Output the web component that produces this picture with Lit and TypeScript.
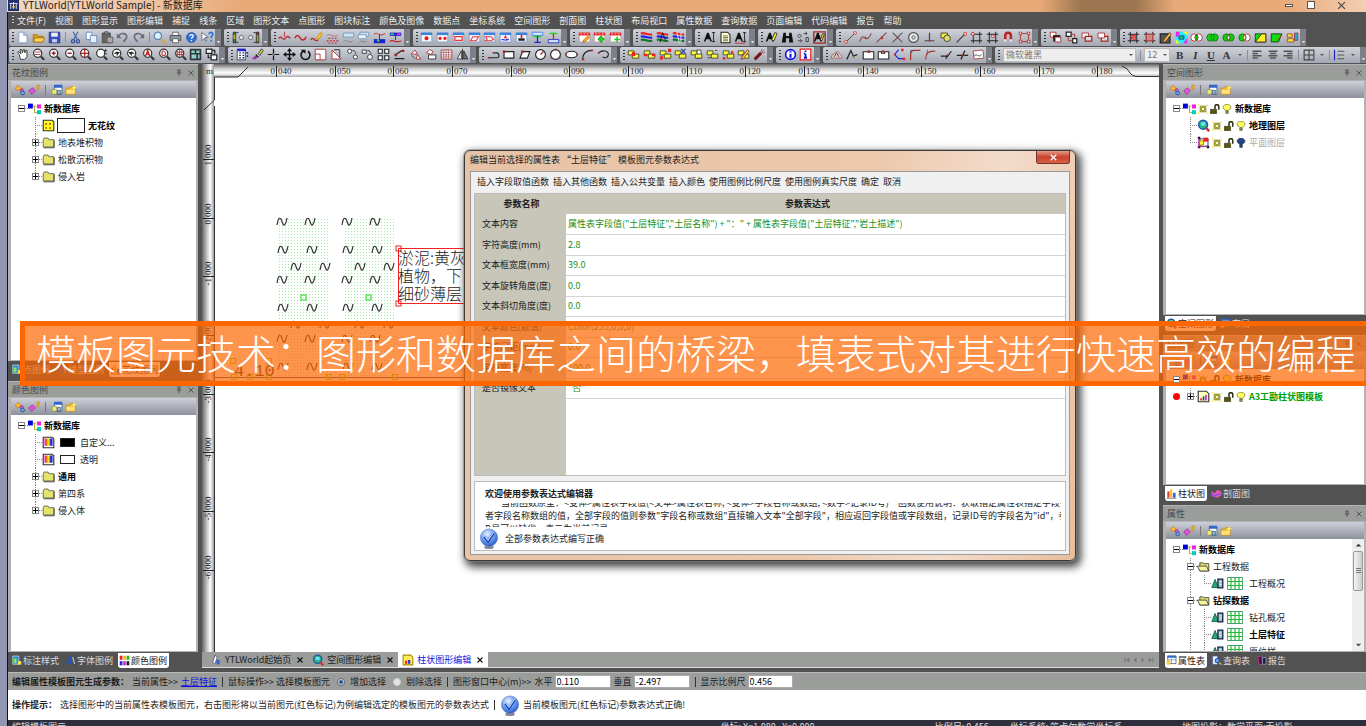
import { LitElement, html, svg, css, nothing } from 'lit';
import { customElement, property } from 'lit/decorators.js';
import { classMap } from 'lit/directives/class-map.js';

/* Glyph notation: layers split by ";", each "fill,stroke,path[,stroke width]" on a 16 x 16 grid; n = none. */
const MAG = '#fff,#333,M2 6.500a5 5 0 1 0 10 0a5 5 0 1 0-10 0,1.5;n,#333,M11 10.500l4 4,2.500;';
const WIN = '#f4f8fd,#7ba0ce,M1.500 2.500h13v11h-13z;#3b82dc,n,M1 2h14v3h-14z;';
const CAL = '#fff,#b99,M1.500 2.500h13v11h-13z;#e22,n,M1 2h14v3.500h-14z;#fff,n,M3 3h2v1h-2zM7 3h2v1h-2zM11 3h2v1h-2z;';
const YB = '#ff3,#333,M1.500 3.500h7v5h-7z;#ff3,#333,M6.500 7.500h8v5h-8z;';
const PEN = '#fc3,#733,M6 11l7-9l2 2l-7 9l-3 1z;';
const RED2 = '#fff,#a22,M2.500 2.500h8v6h-8z;#ddd,#a22,M6.500 6.500h8v6h-8z,1.500;';
const FR = 'n,#222,M4 1v14M12 1v14M1 4h14M1 12h14,1.200;';
const LET = '#111,n,M1 13l4-11h2l4 11h-2l-1-3h-4l-1 3z;';
const BLACK_I = 'n,#111,M13 2v11M11 2h4M11 13h4;';
const STR = 'n,#e22,M1 3c5-2 8 3 14 1,2.500;n,#22e,M1 7c5-2 8 3 14 1,2.500;n,#172,M1 11c5-2 8 3 14 1,2.500;';
const PAL = '#22c,n,M1 2h14v4h-14z;#3d3,n,M2 3h4v2h-4z;#e3e,n,M10 3h4v2h-4z;';

const GLYPHS: Record<string, string> = {
  new: '#fff,#7c9cc4,M3.500 1.500h6l4 4v9h-10z;#cfe0f4,#7c9cc4,M9.500 1.500v4h4z',
  open: '#d99a20,#a66e10,M1.500 4.500h5l1 2h6v7h-12z;#ffd65a,#a66e10,M3.500 8.500h12l-2.500 5h-11z',
  save: '#3a4fc4,#223090,M1.500 1.500h13v13h-13z;#eee,n,M4 2h8v5h-8z;#c8d0f0,n,M5 10h6v4h-6z',
  cut: 'n,#456ba8,M5 1l5 9M11 1l-5 9,1.500;n,#2c4f9a,M3 12.500a2 2 0 1 0 4 0a2 2 0 1 0-4 0M9 12.500a2 2 0 1 0 4 0a2 2 0 1 0-4 0,1.500',
  copy: '#fff,#5a84c0,M1.500 1.500h7v9h-7z;#e4eefa,#5a84c0,M6.500 5.500h8v9h-8z',
  paste: '#666,#444,M1.500 2.500h10v12h-10z;#999,#444,M4.500 1h4v3h-4z;#aaa,#555,M7.500 7.500h7v7h-7z',
  undo: 'n,#666c78,M3 6c4-5 11-3 10 2c-1 3-3 4-4 5,2;#666c78,n,M1 3v6h6z',
  redo: 'n,#666c78,M13 6c-4-5-11-3-10 2c1 3 3 4 4 5,2;#666c78,n,M15 3v6h-6z',
  search: '#dff0fc,#5585b8,M1.500 6a4.500 4.500 0 1 0 9 0a4.500 4.500 0 1 0-9 0,1.500;n,#e0a030,M10 10l5 5,2.500',
  print: '#fff,#555,M4.500 1.500h7v4h-7z;#8e97a4,#444,M1.500 5.500h13v6h-13z;#fff,#555,M4.500 9.500h7v5h-7z',
  help: '#2f6fd8,#1b4fa0,M2 8a6 6 0 1 0 12 0a6 6 0 1 0-12 0;n,#fff,M6 6.500c0-3 4.500-2.500 4 0c-.5 1.500-2 1.500-2 3M8 11v1.500,1.600',
  whats: '#fff,#567,M1 2v10l3-3l2 4l1-1l-2-4h4z;n,#2f6fd8,M10 4c0-3 5-3 4.500 0c-.5 2-2 2-2 5M12.500 11v2,2',
  barL: '#384,#222,M1.500 1.500h3v13h-3z;#cb3,n,M2 5h2v5h-2z;n,#222,M5 2h3M5 14h3;#eee,#555,M9 8a2.500 2.500 0 1 0 5 0a2.500 2.500 0 1 0-5 0',
  barR: '#a23,#222,M11.500 1.500h3v13h-3z;#6b5,n,M12 5h2v8h-2z;n,#222,M8 2h3M8 14h3;#eee,#555,M2 8a2.500 2.500 0 1 0 5 0a2.500 2.500 0 1 0-5 0',
  cv1: 'n,#b22,M1 9c3-5 5 4 8 0s4-2 6 0,1.500;n,#b22,M8 1v6',
  cv2: 'n,#b22,M1 9c3-6 5-3 7 0s5 3 7-2,1.700',
  cv3: 'n,#b22,M1 11c3-6 5 4 9 0,1.500;#fc3,#c80,M8 9l5-7l2 1l-4 7z',
  cv4: 'n,#b66,M1 6c4-5 8 4 14-1;n,#c33,M1 12h2M5 12h2M9 12h2M13 12h2M3 9h2M7 9h2M11 9h2M3 15h2M7 15h2M11 15h2,1.600',
  cv5: '#cfe4f4,#6b93b8,M1.500 2.500h13v5h-13z;n,#777,M2 13c3-5 6 4 11-1',
  cv6: '#cfe4f4,#6b93b8,M3.500 1.500h11v5h-11z;#e8f2fa,#6b93b8,M1.500 4.500h10v5h-10z;n,#777,M3 14c3-4 6 2 9-2',
  pi1: 'n,#c22,M1 4c4-4 7 4 14-1;#22c,n,M1 10h14v5h-14z;#3d3,n,M5 10h3v3h-3z;n,#222,M8 4v7',
  pi2: PAL + 'n,#222,M8 6v5;n,#c22,M1 13c4-4 7 3 14-1,1.500',
  wDot: WIN + '#e11,n,M5.500 9a2.500 2.500 0 1 0 5 0a2.500 2.500 0 1 0-5 0',
  wDots: WIN + '#e11,n,M3 9a2 2 0 1 0 4 0a2 2 0 1 0-4 0M9 9a2 2 0 1 0 4 0a2 2 0 1 0-4 0',
  wRect: WIN + 'n,#e33,M3.500 7h9v4.500h-9z,1.500',
  wPara: WIN + 'n,#e33,M6 7h7l-3 5h-7z,1.300',
  wD: WIN + 'n,#e33,M3 7h7l3 3l-3 2h-7l2-2z,1.300',
  wArr: WIN + 'n,#22c,M3 11c2-2 4 2 9-1,1.500;#e11,n,M8 5l2 4h-4z',
  wSt: WIN + '#222,n,M4 9h8v3h-8z;#e11,n,M7 5h2v4h-2z',
  wI: '#cfe4f4,#3b82dc,M1.500 1.500h13v4h-13z;#3d3,n,M3 6h10v2h-10z;n,#22c,M8 6v8M4 14h8,1.600',
  wI2: '#3d3,n,M3 2h10v2h-10z;n,#d22,M8 3v7,1.600;#cfe4f4,#22c,M1.500 10.500h13v4h-13z',
  calP: CAL + '#fa2,#b60,M7 11l5-5l2 2l-5 5l-3 1z',
  calD: CAL + '#2c2,#181,M10 6l4 4l-4 4l-4-4z',
  calA: CAL + 'n,#2c2,M10 7v7M6.500 10.500h7,2',
  st1: STR,
  st2: STR + 'n,#111,M5 14l3-12l4 10',
  st3: STR + 'n,#fff,M6 1l3 14M11 2v12',
  tA: LET + BLACK_I,
  tDoc: '#ffc,#222,M2.500 1.500h8l3 3v10h-11z,1.300;n,#555,M5 6h6M5 8h6M5 10h6M5 12h6',
  tU: LET + BLACK_I + 'n,#c22,M1 15h13',
  aPen: LET + '#ee3,#222,M8 11l4-9l3 1l-4 9z',
  bino: '#111,n,M3 2h3v4h4v-4h3l2 12h-5v-5h-4v5h-5z',
  abc: 'n,#333,M3 4a2 2 0 1 0 .1 0M8 3h4l-1-2M12 3l-1 2M11 8h3v5h-3zM1 12h5l-2-2M6 12l-2 2',
  aBox: 'n,#a22,M1 1h14v14h-14z,1.600;' + LET + '#ee3,#222,M9 11l3-8l2 1l-3 8z',
  s1: 'n,#333,M2 14l11-11;#fff,#c33,M1 12h3v3h-3zM12 1h3v3h-3z',
  s2: 'n,#844,M1 13c3-9 5-5 7-4s5 0 7-6,1.300;#c33,n,M7 7h2v2h-2z',
  s3: 'n,#844,M2 14l12-12,1.300;#c33,n,M7 7h3v3h-3z',
  s4: 'n,#555,M2 2l12 12M14 2l-12 12,1.300;#c33,n,M7 7h2v2h-2z',
  s5: '#e8e8e8,#555,M2 8a6 6 0 1 0 12 0a6 6 0 1 0-12 0,1.500;n,#555,M6 8a2 2 0 1 0 4 0a2 2 0 1 0-4 0,1.200',
  s6: 'n,#444,M8 2v11M2 12h12,1.500;#c33,n,M7 11h2v2h-2z',
  s7: '#ee3,#333,M2.500 2.500h8v6h-8z;#dd6,#333,M6 9a4 4 0 1 0 8 0a4 4 0 1 0-8 0',
  s8: 'n,#444,M2 14l10-10,1.500;#fff,#c33,M11 2h3v3h-3z',
  s9: FR + '#fff,#c33,M2 2h3v3h-3z',
  s10: FR + '#fff,#c33,M7 5h3v3h-3z',
  mag: 'n,#b22,M4 12v-6c0-5 7-5 7 0v6,3;n,#eee,M4 10v3M11 10v3,3',
  sel: 'n,#a22,M3 3h10v10h-10z;#fff,#a22,M1.500 1.500h3v3h-3zM11.500 1.500h3v3h-3zM1.500 11.500h3v3h-3zM11.500 11.500h3v3h-3z',
  r1: '#fff,#a22,M1.500 1.500h7v6h-7z;#222,n,M5 5h9v8h-9z;#fff,#a22,M7.500 7.500h7v6h-7z',
  r2: '#fff,#222,M1.500 1.500h6v5h-6zM9.500 9.500h5v5h-5z,1.500;n,#a22,M8 4h4v5M4 7v5h5',
  r3: RED2,
  r4: '#ddd,#a22,M6.500 6.500h8v6h-8z,1.500;#fff,#a22,M2.500 2.500h8v6h-8z',
  d1: FR + '#e22,n,M5 5h6v6h-6z;#fff,n,M6 6h1v1h-1zM9 6h1v1h-1zM7.500 8h1v1h-1zM6 10h1v1h-1zM9 9h1v1h-1z',
  d2: FR + '#c88,#c33,M4 4h8v8h-8z',
  d3: '#555,#222,M1.500 3.500h12v11h-12z,1.500;' + PEN,
  d4: '#2ef,n,M1 1h14v14h-14z;#e2e,n,M1 1h5l-2 6h-3zM10 15h5v-6z;#ff2,n,M9 1h6v4zM1 10l5 5h-5z;#2c4,#22c,M5 6h6v4h-6z',
  v1: '#fff,#b22,M1 8a4.500 4.500 0 1 0 9 0a4.500 4.500 0 1 0-9 0M6 8a4.500 4.500 0 1 0 9 0a4.500 4.500 0 1 0-9 0;#1c1,#171,M8 4.500a5 5 0 0 1 0 7a5 5 0 0 1 0-7z',
  v2: '#1c1,#171,M1 8a4.500 4.500 0 1 0 9 0a4.500 4.500 0 1 0-9 0M6 8a4.500 4.500 0 1 0 9 0a4.500 4.500 0 1 0-9 0',
  v3: '#1c1,#171,M1 8a4.500 4.500 0 1 0 9 0a4.500 4.500 0 1 0-9 0M6 8a4.500 4.500 0 1 0 9 0a4.500 4.500 0 1 0-9 0;#fff,#b22,M8 4.500a5 5 0 0 1 0 7a5 5 0 0 1 0-7z',
  v4: '#fff,#b22,M6 8a4.500 4.500 0 1 0 9 0a4.500 4.500 0 1 0-9 0;#1c1,#171,M1 8a4.500 4.500 0 1 0 9 0a4.500 4.500 0 1 0-9 0;#fff,#b22,M8 4.500a5 5 0 0 1 0 7a5 5 0 0 1 0-7z',
  g1: '#1d1,#222,M1.500 3.500h13v10h-13z;#fe2,#222,M1.500 13.500l8-10h5v10z',
  g2: '#1d1,#222,M1.500 3.500h13l-4 10h-9z;n,#c22,M9 12l6-8',
  g3: '#ee3,#a33,M1.500 3.500h6v4h-6zM1.500 9.500h8v4h-8z;#2ac,#a33,M10.500 2.500h4v9h-4z',
  hand: '#fff,#222,M4 8l-2-3l1-1l3 3l-1-5h2l1 4l1-4h1.500l.5 4l1-3h1.500l0 8l-3 3h-5z',
  mW: MAG + 'n,#a22,M3 8h7M4 5h7',
  mP: MAG + 'n,#a22,M7 4v5M4.500 6.500h5,1.800',
  mM: MAG + 'n,#a22,M4.500 6.500h5,1.800',
  mX: MAG + 'n,#a22,M7 1v11M1.500 6.500h11,1.500',
  mS: MAG + 'n,#333,M13 1v4M11 3h4M11 7h4',
  mL: MAG + '#222,n,M9 3l-6 4h4v3l4-5h-4z',
  mR: MAG + '#222,n,M5 3l6 4h-4v3l-4-5h4z',
  mA: MAG + 'n,#c11,M4.500 10l2.500-7l2.500 7M5 7.500h4,1.600',
  mD: MAG + 'n,#a22,M5 4h3l1 1v4h-4z,1.200',
  mG: MAG + 'n,#a22,M4.500 3v8M7 2v9M9.500 3v8M2.500 5h9M2.500 8h9',
  lay: '#243c3c,#222,M1.500 1.500h13v13h-13z;#9cc,n,M3 3h4v3h-4zM9 3h4v3h-4zM3 8h6v5h-6zM11 8h2v5h-2z',
  lay2: '#fff,#222,M1.500 1.500h7v5h-7zM7.500 8.500h7v6h-7z,1.500;n,#222,M4 8v4h3M12 7v-4h-3,1.500',
  cal: '#fff,#235,M1.500 1.500h10v13h-10z;#22c,n,M2 1h10v3h-10zM13 5h2v2h-2zM13 9h2v2h-2z;n,#235,M4 6h2M4 9h2M4 12h2M8 6h2M8 9h2M8 12h2,1.600',
  brush: '#dd3,#222,M9 7l4-6l2 2l-4 6z;#222,n,M6 7l4 4l-4 1z;#93a,n,M1 13l5-4l2 3l-3 2z',
  move0: 'n,#111,M8 1v14M1 8h14,1.500;#888,n,M6.500 6.500h3v3h-3z',
  move: 'n,#111,M8 2v12M2 8h12,1.700;#111,n,M8 0l3 4h-6zM8 16l3-4h-6zM0 8l4-3v6zM16 8l-4-3v6z',
  rot: 'n,#111,M5 4a5.500 5.500 0 1 0 6 0,2;#111,n,M2 2h6v5z',
  sc: '#fff,#a22,M1.500 1.500h13v13h-13z;n,#a22,M1.500 7.500h6v7',
  tri: '#fff,#a22,M2.500 2.500l11 11h-11z;n,#222,M5 2h7v10',
  o1: '#fff,#222,M2 4a2.500 2.500 0 1 0 5 0a2.500 2.500 0 1 0-5 0M9 11a2.500 2.500 0 1 0 5 0a2.500 2.500 0 1 0-5 0;n,#222,M8 3c3 0 4 2 4 4',
  o2: '#fff,#222,M1.500 2.500h5v4h-5zM8 11a3 3 0 1 0 6 0a3 3 0 1 0-6 0;n,#222,M8 3c3 0 4 2 4 4',
  o3: '#fff,#222,M1.500 1.500h5v5h-5zM9.500 1.500h5v5h-5zM1.500 9.500h5v5h-5zM9.500 9.500h5v5h-5z,1.300',
  o4: 'n,#222,M2 13h12M2 9l9-6,1.500;#a22,n,M2 7h3v3h-3zM11 2h3v3h-3z',
  o5: '#fff,#a22,M2.500 7.500l5-5l3 5zM8.500 13.500l2-5l4 5z;n,#222,M3 9l4 4',
  o6: '#fff,#a22,M3 6l4-4l4 2l-2 4z;#fff,#222,M5.500 8.500h9v5h-9z',
  grid: '#fff,#a22,M1.500 2.500h13v11h-13z;n,#a66,M4.500 3v10M7.500 3v10M10.500 3v10M2 5.500h12M2 8.500h12M2 11h12',
  flip: '#fff,#222,M1.500 13.500l5-10v10z;#777,#222,M14.500 13.500l-5-10v10z;n,#222,M8 1v14',
  p1: 'n,#222,M2 12h10c4 0 3-6 0-6h-3,1.400;#a22,n,M1 11h2v2h-2zM7 5h2v2h-2z',
  p2: '#fff,#222,M2.500 4.500h12v8h-12z,1.400;#a22,n,M1 3h3v3h-3z',
  p3: '#fff,#222,M5.500 4.500h9l-3 8h-9z,1.400;#a22,n,M4 3h3v3h-3z',
  p4: '#fff,#222,M2 8a6 6 0 1 0 12 0a6 6 0 1 0-12 0,1.400;n,#a22,M8 8l4-4,1.500',
  p5: '#fff,#222,M2 8a6 6 0 1 0 12 0a6 6 0 1 0-12 0,1.400;#a22,n,M7 1h2v2h-2zM2 11h2v2h-2zM12 11h2v2h-2z',
  p6: '#fff,#222,M1 8a7 4 0 1 0 14 0a7 4 0 1 0-14 0,1.400;#a22,n,M0 7h2v2h-2zM14 7h2v2h-2z',
  p7: 'n,#222,M2 14c0-7 4-11 12-11,1.400;#a22,n,M1 13h3v2h-3zM12 2h3v2h-3z',
  p8: 'n,#222,M2 6c4-4 12-3 12 2c0 4-5 5-7 3,1.400;#a22,n,M1 5h2v2h-2z',
  y1: YB + '#e22,n,M6 5h4v5h-4z', y2: YB + '#e22,n,M1 7h4v3h-4zM11 7h4v3h-4z',
  y3: YB + '#e22,n,M1 10h4v4h-4zM11 1h4v4h-4z', y4: YB + 'n,#24a,M9 1l5 6M14 1l-5 6,1.500',
  y5: '#fff,#333,M8.500 2.500h5v10h-5z;' + YB, y6: YB + 'n,#333,M2 12h4M11 3h3',
  y7: YB + '#e22,n,M1 11h3v3h-3zM11 4h3v3h-3z', y8: YB + PEN,
  y9: 'n,#711,M2 14l8-8,3.500;n,#a44,M10 5l1-4M11 6l4-1M11 5l3-3',
  i1: '#fff,#11d,M2 8a6 6 0 1 0 12 0a6 6 0 1 0-12 0,2;n,#11d,M8 7v5M8 4v1.500,2.500',
  i2: '#fff,#e22,M1.500 1.500h13v13h-13z,1.500;n,#11d,M8 7v5M8 3v2M6 7h2M6 12h4,2.200',
  e1: '#dcc,#a55,M1.500 12.500c0-5 3-4 4-6s5-3 6 0s4 1 3 6z;n,#333,M5 11l3-5l3 5',
  e2: 'n,#222,M1 14l5-11l3 7l5-2,1.500;#993,n,M8 9l4 4l-4-1z',
  e3: '#fff,#222,M1.500 4.500h13v9h-13z,1.300;#a22,n,M7 3h3v3h-3z',
  e4: '#fff,#222,M1.500 4.500h4v2h4v-2h5v9h-13z,1.300;#a22,n,M6 3h3v2h-3z',
  e5: 'n,#22d,M7 2l-5 6l5 5h6,1.400;#e22,n,M10 1h3v3h-3zM12 12h3v3h-3zM1 7h2v2h-2z',
  e6: 'n,#a33,M2 15v-7c0-3 2-5 5-5h7,1.500;n,#555,M2 3v4M2 3h4',
  e7: 'n,#a33,M2 14c0-6 2-11 12-10,1.500;n,#555,M4 2v6',
  e8: 'n,#222,M1 10h8M7 13l7-9,1.500;#a22,n,M8 8h2v2h-2z',
  e9: 'n,#222,M1 9h14M6 14l5-11,1.500;#a22,n,M7 8h3v2h-3z',
  e10: '#fff,#a33,M1.500 3.500l12-1l1 10l-12 1z;n,#333,M3 10c2-5 5 3 9-2',
  al: 'n,#555,M2 3h12M2 6h7M2 9h12M2 12h7,1.800', ac: 'n,#555,M2 3h12M4 6h8M2 9h12M4 12h8,1.800', ar: 'n,#555,M2 3h12M7 6h7M2 9h12M7 12h7,1.800',
  brd: 'n,#444,M1.500 1.500h13v13h-13zM8 1.500v13M1.500 8h13,1.500',
  lst: 'n,#555,M6 3h9M6 8h9M6 13h9,1.600;n,#22c,M2 1v14,1.600',
  dn: '#555,n,M4 6h8l-4 4z',
  up: '#333,n,M4 10h8l-4-4z',
  /* panels */
  pa: '#fb3,#b70,M1.500 6l4-4l4 4l-4 3z;#d6d,#828,M8 8l3-2l2 3l-3 2z;#6ae,#248,M9 12a2.500 2.500 0 1 0 5 0a2.500 2.500 0 1 0-5 0',
  pb: '#d5d,#938,M1 9l5-4l4 4l-5 5z;#fb3,#c80,M12 1.500h3l-1 6h-2z',
  pc: '#fff,#357,M4.500 2.500h10v11h-10z;#36c,n,M4 1h11v4h-11z;#ee7,#995,M1.500 7.500h6v6h-6z;#9bd,#357,M8.500 8.500h4v5h-4z',
  pd: '#f5c33b,#c48a14,M1.500 5.500h5l1-2h6v10h-12z;#ffe27a,n,M2 8h11v5h-11z;#fff27a,n,M12 1l1 3l3 1l-3 1l-1 3l-1-3l-2-1l2-1z',
  pin: 'n,#444,M5 2h6M6 2v6M10 2v6M4 8h8M8 8v6,1.500',
  x: 'n,#444,M3 3l10 10M13 3l-10 10,1.600',
  xb: 'n,#111,M3 3l10 10M13 3l-10 10,2.200',
  db: '#00d,n,M0 2h6v6h-6z;n,#a90,M6 5h4M8 5v8h3;#e2d,n,M11 3h5v5h-5z;#0cb,n,M11 10h5v5h-5z',
  pat: '#ff2,#333,M1.500 1.500h11l2 2v11h-13z,1.400;#c30,n,M4 5h2v2h-2zM9 5h2v2h-2zM4 10h2v2h-2zM9 10h2v2h-2z',
  fold: '#e4e46a,#555,M1.500 4.500l1-2h5l1 2h6v9h-13z;n,#333,M2 14.500h13v-9',
  foldo: '#e4e46a,#333,M3.500 6.500v-3h4l1 1h6v9h-11z;#f6f69a,#333,M.5 7.500h11l3 6h-11z',
  pal: '#fff,#333,M1.500 1.500h11l2 2v11h-13z,1.400;#e2e,n,M3 3h2v9h-2z;#e60,n,M5 3h2v9h-2z;#fd0,n,M7 3h2v9h-2z;#0ad,n,M9 3h1v9h-1z;#22d,n,M10 3h3v9h-3z',
  sun: '#ee2,#772,M3.500 3.500h9v9h-9z,1.400;#ee2,n,M0 0l5 2h-5zM16 0v4l-3-2zM0 16v-4l3 3zM16 16h-4l2-3z;#ffb,#773,M5 8a3 3 0 1 0 6 0a3 3 0 1 0-6 0,1.400',
  lock: '#551,#331,M.5 8.500h10v7h-10z;n,#331,M8 8v-4c0-4 6-4 6 0v5,2.500',
  bulb: '#ff5,#885,M5 .5h6l3 3v3l-4 4h-4l-4-4v-3z,1.400;#995,#553,M6 11v4h4v-4z',
  bulbd: '#248,#124,M5 .5h6l3 3v3l-4 4h-4l-4-4v-3z;#357,#124,M6 11v4h4v-4z',
  geo: '#2b8,#25a,M2 7a5.500 5.500 0 1 0 11 0a5.500 5.500 0 1 0-11 0,1.800;#7df,n,M5 4h5v4h-5z;n,#c33,M11 11l4 4,3',
  plan: '#fff,#222,M3.500 3.500h10v9h-10z;#ff3,#a60,M3 6h5v5h-5z;#e22,n,M8 2h6v5h-6z;#111,n,M1 1h3v3h-3zM1 12h3v3h-3zM12 12h3v3h-3z;n,#a2a,M2 13h12M2 2v12',
  log: '#ffb,#333,M1.500 1.500h10l3 3v10h-13z,1.400;#e22,n,M4 10h2v3h-2z;#22d,n,M7 8h2v5h-2z;#b2b,n,M10 6h2v7h-2z',
  loy: '#fe5,#a80,M1.500 1.500h10l3 3v10h-13z,1.400;#e22,n,M4 9h3v4h-3z;#33d,n,M8 8h3v5h-3z',
  tree: '#2a7,#153,M5 3l4 10h-8z;#9bc,#124,M8.500 2.500h6v11h-6z,1.600;n,#fff,M10 6h3M10 9h3',
  tbl: '#fff,#184,M.5 .5h19v15h-19z;n,#2b3,M5 1v14M10 1v14M15 1v14M1 5.500h18M1 10.500h18,1.500',
  t1: '#38d,#cde,M2.500 1.500h9v12h-9z;#7e5,n,M4 5h4v7h-4z;#fd5,n,M10 9h5v5h-5z',
  t2: '#25b,n,M1 13l7-11h2v11h-3v-5l-3 5z;n,#bcf,M11 3l3 10,1.500',
  t3: '#e22,n,M1 1h4v6h-4z;#fb0,n,M6 1h4v6h-4z;#2b2,n,M11 1h4v6h-4z;#22d,n,M1 9h4v6h-4z;#d2d,n,M6 9h4v6h-4z;#222,n,M11 9h4v6h-4z',
  t4: '#d33,n,M2 5h3v9h-3z;#fb2,n,M6 2h3v12h-3z;#36d,n,M10 7h4v7h-4z;n,#555,M1 15h14',
  t5: '#e5a,n,M1 4l4 4l4-5l6 2v6l-6 3l-8-2z;n,#75f,M1 8l4 4l5-3l5 1,2',
  t6: '#fff,#246,M2.500 1.500h12v11h-12z;#36c,n,M2 1h13v3h-13z;#fc3,n,M1 8h5v6h-5z;n,#68a,M8 5v7M3 7h11',
  t7: '#fff,#36c,M2.500 1.500h7v12h-7z;#7ad,#25b,M6 8a3 3 0 1 0 6 0a3 3 0 1 0-6 0,1.500;n,#fb3,M12 11l3 3,2',
  t8: '#513,#b4a,M2.500 2.500h6l1 11h-5z;#223,#9ad,M9.500 3.500h5v10h-5z',
  jet: '#fff,#446,M6.500 1.500l3 3l-3 9l-3-2z;#36c,n,M8 8h5v6h-4z',
  nf: '#777,n,M3 3h2v10h-2zM13 3v10l-7-5z', np: '#777,n,M11 3v10l-6-5z', nn: '#777,n,M5 3v10l6-5z', nl: '#777,n,M11 3h2v10h-2zM3 3v10l7-5z',
  app: '#24306c,n,M0 0h16v16h-16z;n,#fff,M2 5h12M4 5v8M8 3v10M12 5v8,1.200;#fc4,n,M6 9h4v2h-4z',
};

const glyph = (name: string) => html`<svg class="g" viewBox=${name === 'tbl' ? '0 0 20 16' : '0 0 16 16'} aria-hidden="true">${(GLYPHS[name] ?? '')
  .split(';').filter(Boolean).map(part => {
    const [f, s, d, w] = part.split(',');
    return svg`<path d=${d} fill=${f === 'n' ? 'none' : f} stroke=${s === 'n' ? 'none' : s} stroke-width=${w ?? '1'}></path>`;
  })}</svg>`;

const base = css`
  *, *::before, *::after { box-sizing: border-box; }
  .g { display: block; width: 13px; height: 13px; flex: none; }
  button { border: 0; padding: 0; margin: 0; background: none; font: inherit; color: inherit; }
  a { color: #1111dd; }
`;

const BALL = html`<svg class="ball" viewBox="0 0 20 24" aria-hidden="true">
  <defs><radialGradient id="bg" cx=".4" cy=".3" r=".8"><stop offset="0" stop-color="#e8f2ff"/><stop offset=".5" stop-color="#6b9df0"/><stop offset="1" stop-color="#1c48b8"/></radialGradient></defs>
  <ellipse cx="10" cy="21" rx="5" ry="2" fill="#889"/><circle cx="10" cy="11" r="9" fill="url(#bg)" stroke="#4a72c8" stroke-width=".6"/>
  <path d="M5 10l4 5l6-9" fill="none" stroke="#1f4bc0" stroke-width="2.500"/><path d="M5 9l4 5l6-9" fill="none" stroke="#eaf3ff" stroke-width="1"/></svg>`;

@customElement('tool-group')
class ToolGroup extends LitElement {
  @property({ attribute: false }) tools: string[] = [];
  static styles = [base, css`
    :host { display: flex; align-items: center; min-width: 0; border-radius: 2px; background: linear-gradient(#cfd2d9, #a4a8b2); }
    .grip { flex: none; width: 2px; height: 10px; margin: 0 1px 0 3px; background: repeating-linear-gradient(#333 0 1px, transparent 1px 3px); }
    .tool { flex: 1 1 0; min-width: 0; display: flex; justify-content: center; }
    .sep { flex: none; width: 1px; height: 10px; margin: 0 2px; background: #8b8f99; }
    .more { align-self: stretch; width: 6px; display: flex; align-items: flex-end; border-radius: 0 2px 2px 0; background: #7d8088; }
    .more .g { width: 7px; height: 8px; filter: invert(1) brightness(2); }
  `];
  render() {
    return html`<span class="grip"></span>
      ${this.tools.map(t => t === '|' ? html`<span class="sep"></span>` : html`<button class="tool" aria-label=${t}>${glyph(t)}</button>`)}
      <slot></slot><button class="more" aria-label="more">${glyph('dn')}</button>`;
  }
}

interface Row { p: string; icons: string[]; text: string; bold?: boolean; tone?: string; box?: string; }

@customElement('tree-view')
class TreeView extends LitElement {
  @property({ attribute: false }) rows: Row[] = [];
  static styles = [base, css`
    :host { display: block; flex: 1; min-width: 0; min-height: 0; overflow: hidden; padding: 2px 3px 0; background: #fff; }
    .row { display: flex; align-items: center; height: 17px; gap: 2px; white-space: nowrap; }
    .pre { display: flex; align-self: stretch; margin-right: -2px; }
    .cell { position: relative; width: 14px; display: flex; align-items: center; justify-content: center; }
    .v::before, .e::before { content: ''; position: absolute; left: 7px; top: 0; bottom: 0; border-left: 1px dotted #888; }
    .e::before { bottom: 8px; }
    .h::after { content: ''; position: absolute; left: 7px; right: 0; top: 8px; border-top: 1px dotted #888; }
    .exp { position: relative; z-index: 1; width: 7px; height: 7px; border: 1px solid #888; background: #fff; display: grid; place-items: center; }
    .exp svg { width: 5px; height: 5px; display: block; }
    .dot { width: 7px; height: 7px; border-radius: 4px; background: #f00; }
    .s { width: 10px; height: 10px; }
    .s .g { width: 10px; height: 10px; }
    .w .g { width: 16px; }
    .w { margin: 0 3px 0 1px; }
    .box { border: 1px solid #222; background: #fff; }
    .big { width: 28px; height: 15px; }
    .sm, .fill { width: 15px; height: 9px; margin: 0 2px 0 3px; }
    .fill { background: #000; }
    .t { padding-left: 1px; }
    .bold { font-weight: 700; color: #000; }
    .off { color: #aaa; }
    .green { color: #00a000; }
  `];
  cell(c: string) {
    const exp = 'RPQMN'.includes(c);
    const plus = 'PQ'.includes(c);
    return html`<span class=${classMap({ cell: true, v: 'tPM|'.includes(c), e: 'lQN'.includes(c), h: 'tlPQMNR'.includes(c) })}>
      ${exp ? html`<span class="exp"><svg viewBox="0 0 5 5"><path d=${plus ? 'M0 2.500h5M2.500 0v5' : 'M0 2.500h5'} stroke="#000" fill="none"/></svg></span>` : nothing}
      ${c === 'D' ? html`<span class="dot"></span>` : nothing}</span>`;
  }
  render() {
    return this.rows.map(r => html`<div class="row"><span class="pre">${[...r.p].map(c => this.cell(c))}</span>
      ${r.icons.map(i => html`<span class=${classMap({ s: ['sun', 'lock', 'bulb', 'bulbd'].includes(i), w: i === 'tbl' })}>${glyph(i)}</span>`)}
      ${r.box ? html`<span class="box ${r.box}"></span>` : nothing}
      <span class=${classMap({ t: true, bold: !!r.bold, off: r.tone === 'off', green: r.tone === 'green' })}>${r.text}</span></div>`);
  }
}

@customElement('dock-panel')
class DockPanel extends LitElement {
  @property() heading = '';
  @property({ attribute: false }) rows: Row[] = [];
  @property({ attribute: false }) tabs: { i: string; t: string }[] = [];
  @property({ type: Number }) active = 0;
  @property({ type: Boolean }) scroll = false;
  static styles = [base, css`
    :host { display: flex; flex-direction: column; min-height: 0; min-width: 0; }
    .head { flex: none; height: 16px; padding: 0 3px 0 4px; display: flex; align-items: center; gap: 1px; background: #9b9d9b; color: #484848; border-top: 1px solid #b4b4b4; }
    .head span { flex: 1; }
    .head .g { width: 8px; height: 8px; margin-left: 3px; }
    .frame { flex: 1; min-height: 0; display: flex; flex-direction: column; border: 2px solid #b2b2b2; border-width: 1px 2px 1px 3px; }
    .bar { flex: none; height: 17px; padding: 0 3px; display: flex; align-items: center; gap: 2px; background: linear-gradient(#cdd0d8, #8d919b); }
    .bar .g { width: 12px; height: 12px; }
    .sep { width: 1px; height: 10px; background: #777; margin: 0 3px; }
    .mid { flex: 1; min-height: 0; display: flex; }
    .scroll { width: 12px; flex: none; background: #eee; display: flex; flex-direction: column; align-items: center; }
    .thumb { width: 10px; height: 40px; border: 1px solid #999; border-radius: 2px; background: linear-gradient(90deg, #f4f4f4, #ccc); display: grid; place-items: center; }
    .thumb::before { content: ''; width: 5px; height: 6px; background: repeating-linear-gradient(#777 0 1px, transparent 1px 2px); }
    .scroll .g { width: 11px; height: 12px; }
    .grow { flex: 1; }
    .tabs { flex: none; height: 20px; padding: 1px 0 4px 2px; display: flex; gap: 3px; color: #ddd; }
    .tab { display: flex; align-items: center; gap: 1px; padding: 0 2px 0 1px; white-space: nowrap; }
    .tab .g { width: 11px; height: 11px; }
    .on { background: #fff; color: #222; border-radius: 0 0 3px 3px; }
  `];
  render() {
    return html`<div class="head"><span>${this.heading}</span><button aria-label="pin">${glyph('pin')}</button><button aria-label="close">${glyph('x')}</button></div>
      <div class="frame"><div class="bar">${['pa', 'pb', '|', 'pc', 'pd'].map(t => t === '|' ? html`<i class="sep"></i>` : html`<button aria-label=${t}>${glyph(t)}</button>`)}</div>
      <div class="mid"><tree-view .rows=${this.rows}></tree-view>
      ${this.scroll ? html`<div class="scroll">${glyph('up')}<div class="thumb"></div><div class="grow"></div>${glyph('dn')}</div>` : nothing}</div></div>
      <div class="tabs">${this.tabs.map((t, n) => html`<button class=${classMap({ tab: true, on: n === this.active })}>${glyph(t.i)}${t.t}</button>`)}</div>`;
  }
}

@customElement('param-dialog')
class ParamDialog extends LitElement {
  static styles = [base, css`
    :host { display: flex; flex-direction: column; padding: 0 5px 5px; border: 1px solid #3c3a38; border-radius: 6px; background: linear-gradient(100deg, #e6c3a6, #ecc8ac 60%, #f3dccb 80%, #e8bd9b); box-shadow: 0 0 0 1px #8888, 3px 4px 9px 2px #000b; }
    .title { display: flex; align-items: flex-start; height: 20px; flex: none; }
    .title span { flex: 1; line-height: 18px; }
    .close { width: 34px; height: 13px; display: grid; place-items: center; border: 1px solid #733; border-top: 0; border-radius: 0 0 3px 3px; background: linear-gradient(#e59a88, #c8432c 50%, #d8603f); }
    .close .g { width: 9px; height: 9px; filter: invert(1) brightness(2); }
    .body { flex: 1; min-height: 0; display: flex; flex-direction: column; gap: 5px; padding: 0 3px 3px; border: 1px solid #999; background: #f0f0f0; }
    .menu { display: flex; align-items: center; gap: 4px; height: 16px; padding: 0 3px; margin-top: 2px; margin-bottom: -2px; white-space: nowrap; }
    .sheet { flex: 1; min-height: 0; border: 1px solid #bbb; background: linear-gradient(90deg, #c8c6b8 91px, #fff 91px); overflow: hidden; }
    table { width: 100%; height: 205px; border-collapse: collapse; table-layout: fixed; }
    .name { width: 91px; }
    th, td { height: 20px; padding: 0 0 0 2px; text-align: left; font-weight: 400; }
    thead th { text-align: center; font-weight: 700; background: #c8c6b8; }
    thead .expr { padding-right: 18px; }
    tbody th { padding-left: 7px; }
    td { color: #179017; border-bottom: 1px solid #d4d4d0; background: #fff; }
    .info { flex: none; height: 70px; padding: 4px 4px 0 10px; border: 1px solid #bbb; background: #fff; }
    .info strong { display: block; height: 17px; line-height: 15px; }
    .help { height: 24px; display: flex; flex-direction: column; justify-content: center; overflow: hidden; white-space: nowrap; }
    .help span { flex: none; line-height: 13px; }
    .first { padding-left: 16px; }
    .ok { display: flex; align-items: center; gap: 6px; margin-left: -6px; }
    .ball { width: 20px; height: 23px; flex: none; }
  `];
  render() {
    const rows = [
      ['文本内容', '属性表字段值("土层特征","土层名称") + "：" + 属性表字段值("土层特征","岩土描述")'],
      ['字符高度(mm)', '2.8'], ['文本框宽度(mm)', '39.0'], ['文本旋转角度(度)', '0.0'], ['文本斜切角度(度)', '0.0'],
      ['文本颜色(数值)', 'Color(255,0,0,0)'], ['字符间距(mm)', '0.0'], ['字符宽度(%)', '100.0'], ['是否镜像文本', '"否"'],
    ];
    return html`<div class="title"><span>编辑当前选择的属性表 “土层特征” 模板图元参数表达式</span><button class="close" aria-label="关闭">${glyph('xb')}</button></div>
      <div class="body"><div class="menu">${['插入字段取值函数', '插入其他函数', '插入公共变量', '插入颜色', '使用图例比例尺度', '使用图例真实尺度', '确定', '取消'].map(m => html`<button>${m}</button>`)}</div>
      <div class="sheet"><table><thead><tr><th class="name">参数名称</th><th class="expr">参数表达式</th></tr></thead>
      <tbody>${rows.map(r => html`<tr><th>${r[0]}</th><td>${r[1]}</td></tr>`)}</tbody></table></div>
      <div class="info"><strong>欢迎使用参数表达式编辑器</strong>
        <div class="help"><span class="first">当前函数原型：&lt;变体&gt;属性表字段值(&lt;文本&gt;属性表名称, &lt;变体&gt;字段名称或数组, &lt;数字&gt;记录ID号)　函数使用说明：获取指定属性表指定字段名称或</span>
        <span>者字段名称数组的值，全部字段的值则参数"字段名称或数组"直接输入文本"全部字段"，相应返回字段值或字段数组，记录ID号的字段名为"id"，参数记录I</span>
        <span>D号可以缺省，表示为当前记录</span></div>
        <div class="ok">${BALL}<span>全部参数表达式编写正确</span></div></div></div>`;
  }
}

@customElement('map-view')
class MapView extends LitElement {
  static styles = [base, css`
    :host { display: block; min-height: 0; background: #fff; overflow: hidden; }
    .art { display: block; width: 100%; height: 100%; }
    .num { font: 9px 'Liberation Serif', serif; fill: #222; }
    .note { font: 300 16px 'Noto Sans CJK SC', sans-serif; fill: #222; }
    .len { font: 17px 'Liberation Mono', monospace; fill: #333; }
  `];
  render() {
    const step = 176 / 3;
    const waves: number[][] = [];
    const add = (y: number, xs: number[]) => xs.forEach(x => waves.push([x, y]));
    for (const y of [217, 275, 334]) add(y, [277, 305, 342, 370]);
    for (const y of [245, 303, 362]) add(y, [278, 307, 343, 372]);
    for (const y of [262, 320]) add(y, [291, 320, 355, 384]);
    const handles = (pts: number[][], c: string) => pts.map(([x, y]) => svg`<rect x=${x - 2.5} y=${y - 2.5} width="5" height="5" fill="none" stroke=${c}></rect>`);
    return html`<svg class="art">
      <defs>
        <linearGradient id="rt" x2="0" y2="1"><stop offset="0" stop-color="#666"/><stop offset=".35" stop-color="#ccc"/><stop offset=".7" stop-color="#fff"/><stop offset="1" stop-color="#aaa"/></linearGradient>
        <linearGradient id="rl"><stop offset="0" stop-color="#666"/><stop offset=".45" stop-color="#ccc"/><stop offset=".7" stop-color="#fff"/><stop offset="1" stop-color="#999"/></linearGradient>
        <pattern id="dots" width="3" height="3" patternUnits="userSpaceOnUse"><rect width="1" height="1" fill="#a4eca4"/></pattern>
      </defs>
      <rect width="100%" height="13" fill="url(#rt)"/><rect width="12" height="100%" fill="url(#rl)"/>
      <path d="M12.500 588V42M12.500 36V13H36L46 3M12.500 30V36L2 46M920 2q6 2 8 7q2 3 6 3.500H957" fill="none" stroke="#333"/>
      <text class="num" x="4" y="10">m</text>
      ${Array.from({ length: 15 }, (_, i) => {
        const x = Math.round(75 + i * step);
        return svg`<path d="M${x - 0.5} 2v11" stroke="#222"></path><text class="num" x=${x - 2} y="10" text-anchor="end">0</text><text class="num" x=${x + 1} y="10">${String(40 + i * 10).padStart(3, '0')}</text>`;
      })}
      ${[1, 0, -1, -2, -3, -4, -5, -6].map((n, i) => {
        const y = Math.round(95 + i * step);
        return svg`<path d="M1 ${y + 0.5}h11" stroke="#222"></path><g transform="translate(9 ${y}) rotate(-90)"><text class="num" x="1">000</text><text class="num" x="-2" text-anchor="end">${n}</text></g>`;
      })}
      <g transform="translate(-202 -64)">
        <rect x="277" y="217" width="52" height="161" fill="url(#dots)"/><rect x="343" y="217" width="52" height="161" fill="url(#dots)"/>
        ${waves.map(([x, y]) => svg`<path transform="translate(${x} ${y})" d="M0 8C1 2 2 0 4 2L6 7C7 10 9 7 10 1" fill="none" stroke="#333" stroke-width="1.200"></path>`)}
        <path d="M214 377.500H470" stroke="#444"/>
        ${handles([[303.5, 297.5], [368.5, 297.5]], '#1d1')}
        ${handles([[233, 361], [269, 361], [234, 377], [250, 377], [269, 377], [329, 377], [342, 377], [395, 377]], '#8c2')}
        <text class="len" x="234" y="376">4.10</text>
        <path d="M398.500 248.500H480M398.500 248.500V303.500H480" fill="none" stroke="#e22"/>
        ${handles([[398.5, 248.5], [398.5, 303.5]], '#e22')}
        <text class="note" x="398" y="264">淤泥:黄灰</text><text class="note" x="398" y="282">植物，下</text><text class="note" x="398" y="300">细砂薄层</text>
      </g></svg>`;
  }
}

@customElement('app-root')
class AppRoot extends LitElement {
  static styles = [base, css`
    :host { display: grid; grid-template-rows: 12px 17px 35px minmax(0, 1fr) 18px 30px 6px; height: 100vh; position: relative; overflow: hidden; padding-left: 7px;
      background: linear-gradient(90deg, #9296b2 7px, #111 7px 8px, #525252 8px); color: #1c1c1c; font: 9px/12px 'Noto Sans CJK SC', 'Open Sans', sans-serif; }
    .caption { display: flex; align-items: center; gap: 4px; padding: 0 8px 2px 1px; font-size: 10px; background: linear-gradient(90deg, #f0d6c2 0, #eec09a 160px, #e9aa79 230px 76%, #9c7650 79% 83%, #e9aa79 86% 94%, #f2cfb4); }
    .caption span { flex: 1; line-height: 10px; }
    .caption .g { width: 11px; height: 11px; }
    .caption button { width: 18px; display: grid; place-items: center; }
    .caption .x { width: 34px; }
    .btn { display: block; width: 8px; height: 3px; border: 1px solid #555; background: #fff; }
    .max { height: 8px; }
    .menu { display: flex; align-items: center; gap: 9px; padding-left: 13px; color: #eee; white-space: nowrap; background: linear-gradient(90deg, transparent 1px, #525252 1px); }
    .menu::before { content: ''; width: 2px; height: 9px; margin: 0 -6px 0 -8px; background: repeating-linear-gradient(#ccc 0 1px, transparent 1px 3px); }
    .bars { display: flex; flex-direction: column; gap: 1px; padding: 0 0 1px 2px; }
    .bar { display: flex; gap: 3px; height: 17px; }
    .bar1 { padding-right: 60px; }
    .n2 { flex: 2 0 12px; } .n3 { flex: 3 0 12px; } .n4 { flex: 4 0 12px; } .n8 { flex: 8 0 12px; } .n9 { flex: 9 0 12px; } .n10 { flex: 10 0 12px; }
    .n11 { flex: 11 0 12px; } .n12 { flex: 12 0 12px; } .n12s { flex: 12 0 22px; } .n13 { flex: 13 0 12px; } .n15 { flex: 15 0 12px; }
    .fmt { flex: 0 0 371px; }
    .fields { flex: 1; display: flex; align-items: center; justify-content: space-between; padding: 0 4px 0 2px; }
    .fields .g { width: 12px; height: 12px; }
    .fields .d { width: 7px; }
    .fields .d .g { width: 8px; height: 10px; }
    .pick { display: flex; align-items: center; height: 14px; background: #eee; border: 1px solid #bbb; }
    select { appearance: none; border: 0; padding: 0 2px; background: none; font: inherit; color: #777; min-width: 0; }
    .font { width: 123px; } .size { width: 16px; }
    .pick .g { width: 8px; }
    .sep { width: 1px; height: 10px; background: #8b8f99; }
    .ch { width: 12px; font: 700 11px/14px 'Liberation Serif', serif; color: #333; }
    .it { font-style: italic; } .un { text-decoration: underline; }
    .main { display: grid; grid-template-columns: 190px minmax(0, 1fr) 203px; gap: 4px; padding-left: 1px; min-height: 0; }
    .left { display: grid; grid-template-rows: minmax(0, 317fr) minmax(0, 291fr); min-height: 0; }
    .right { display: grid; grid-template-rows: minmax(0, 271fr) minmax(0, 170fr) minmax(0, 167fr); min-height: 0; }
    .center { display: flex; flex-direction: column; min-height: 0; }
    .view { flex: 1; }
    .docs { height: 16px; margin-bottom: 4px; display: flex; align-items: center; padding: 0 4px; background: #9b9d9b; border-bottom: 1px solid #ddd; white-space: nowrap; }
    .doc { display: flex; align-items: center; gap: 3px; height: 15px; padding: 0 4px; }
    .doc .g { width: 12px; height: 12px; }
    .doc button .g { width: 8px; height: 8px; margin-left: 2px; }
    .on { background: #fff; color: #11d; }
    .grow { flex: 1; }
    .nav .g { width: 8px; height: 8px; }
    .strip { display: flex; align-items: center; white-space: nowrap; margin-left: 1px; padding: 0 14px 0 4px; gap: 3px; }
    .params { background: #9b9d9b; border-top: 1px solid #b8b8b8; }
    .params label { display: flex; align-items: center; gap: 2px; }
    .params input[type='text'] { width: 56px; height: 13px; padding: 0 1px; border: 1px solid #aaa; font: inherit; background: #fff; }
    .params input.sc { width: 45px; }
    input[type='radio'] { appearance: none; width: 8px; height: 8px; margin: 0 3px 0 4px; border-radius: 5px; border: 1px solid #ccc; background: #e4e4e4; }
    input[type='radio']:checked { border-color: #667; background: radial-gradient(#1a4c8c 1px, #eef 3px); }
    .rule { width: 1px; height: 10px; margin: 0 2px; background: #333; }
    .hint { background: #fff; }
    .ball { width: 20px; height: 23px; flex: none; }
    .status { display: flex; align-items: flex-start; overflow: hidden; margin-left: 1px; padding: 0 4px; background: #2e2f3c; color: #ddd; line-height: 13px; white-space: nowrap; }
    .s1 { flex: 708; } .s2 { flex: 214; } .s3 { flex: 75; } .s4 { flex: 172; } .s5 { flex: 180; }
    .dialog { position: absolute; left: 464px; top: 150px; width: 612px; height: 411px; }
    .banner { position: absolute; left: 20px; right: 0; top: 321px; height: 65px; padding-left: 11px; border: 5px solid #ff6600; border-right: 0; background: rgba(255, 102, 0, .7); color: #fff; font: 300 40px/53px 'Noto Sans CJK SC', sans-serif; white-space: nowrap; overflow: hidden; margin: 0; }
  `];
  render() {
    const menu = '文件(F) 视图 图形显示 图形编辑 捕捉 线条 区域 图形文本 点图形 图块标注 颜色及图像 数据点 坐标系统 空间图形 剖面图 柱状图 布局视口 属性数据 查询数据 页面编辑 代码编辑 报告 帮助'.split(' ');
    const row1: [string, string][] = [
      ['n12s', 'new open save | cut copy paste undo redo | search print help whats'], ['n2', 'barL barR'], ['n8', 'cv1 cv2 cv3 cv4 cv5 cv6 pi1 pi2'],
      ['n9', 'wDot wDots wRect wPara wD wArr wSt wI wI2'], ['n3', 'calP calD calA'], ['n3', 'st1 st2 st3'], ['n3', 'tA tDoc tU'], ['n4', 'aPen bino abc aBox'],
      ['n12', 's1 s2 s3 s4 s5 s6 s7 s8 s9 s10 mag sel'], ['n4', 'r1 r2 r3 r4'], ['n11', 'd1 d2 d3 d4 v1 v2 v3 v4 g1 g2 g3']];
    const row2: [string, string][] = [
      ['n13', 'hand mW mP mM mX mS mL mR mA mD mG lay lay2'], ['n15', 'cal brush move0 move rot sc tri o1 o2 o3 o4 o5 o6 grid flip'], ['n8', 'p1 p2 p3 p4 p5 p6 p7 p8'],
      ['n9', 'y1 y2 y3 y4 y5 y6 y7 y8 y9'], ['n2', 'i1 i2'], ['n10', 'e1 e2 e3 e4 e5 e6 e7 e8 e9 e10']];
    const groups = (r: [string, string][]) => r.map(([c, t]) => html`<tool-group class=${c} .tools=${t.split(' ')}></tool-group>`);
    const F = ['fold'], L = ['sun', 'lock', 'bulb'];
    const left1: Row[] = [{ p: 'R', icons: ['db'], text: '新数据库', bold: true }, { p: ' t', icons: ['pat'], text: '无花纹', bold: true, box: 'big' },
      { p: ' P', icons: F, text: '地表堆积物' }, { p: ' P', icons: F, text: '松散沉积物' }, { p: ' Q', icons: F, text: '侵入岩' }];
    const left2: Row[] = [{ p: 'R', icons: ['db'], text: '新数据库', bold: true }, { p: ' t', icons: ['pal'], text: '自定义...', box: 'fill' }, { p: ' t', icons: ['pal'], text: '透明', box: 'sm' },
      { p: ' P', icons: F, text: '通用', bold: true }, { p: ' P', icons: F, text: '第四系' }, { p: ' Q', icons: F, text: '侵入体' }];
    const right1: Row[] = [{ p: 'R', icons: ['db', ...L], text: '新数据库', bold: true }, { p: ' t', icons: ['geo', ...L], text: '地理图层', bold: true },
      { p: ' l', icons: ['plan', 'sun', 'lock', 'bulbd'], text: '平面图层', tone: 'off' }];
    const right2: Row[] = [{ p: 'R', icons: ['db', ...L], text: '新数据库', bold: true }, { p: 'DQ', icons: ['log', ...L], text: 'A3工勘柱状图模板', bold: true, tone: 'green' }];
    const T = ['tree', 'tbl'];
    const right3: Row[] = [{ p: 'R', icons: ['db'], text: '新数据库', bold: true }, { p: ' M', icons: ['foldo'], text: '工程数据' }, { p: ' |l', icons: T, text: '工程概况' },
      { p: ' M', icons: ['foldo'], text: '钻探数据', bold: true }, { p: ' |t', icons: T, text: '钻孔概况' }, { p: ' |t', icons: T, text: '土层特征', bold: true }, { p: ' |t', icons: T, text: '原位样' }];
    return html`
      <header class="caption">${glyph('app')}<span>YTLWorld[YTLWorld Sample] - 新数据库</span>
        <button aria-label="最小化"><i class="btn"></i></button><button aria-label="最大化"><i class="btn max"></i></button><button class="x" aria-label="关闭">${glyph('x')}</button></header>
      <nav class="menu">${menu.map(m => html`<button>${m}</button>`)}</nav>
      <div class="bars"><div class="bar bar1">${groups(row1)}</div>
        <div class="bar">${groups(row2)}<tool-group class="fmt"><div class="fields">
          <span class="pick"><select class="font" aria-label="字体"><option>微软雅黑</option></select>${glyph('dn')}</span><i class="sep"></i>
          <span class="pick"><select class="size" aria-label="字号"><option>12</option></select>${glyph('dn')}</span>
          <button class="ch">B</button><button class="ch it">I</button><button class="ch un">U</button><button class="ch">A</button><span class="d">${glyph('dn')}</span><i class="sep"></i>
          ${['al', 'ac', 'ar'].map(t => html`<button aria-label=${t}>${glyph(t)}</button>`)}<i class="sep"></i>
          <button aria-label="边框">${glyph('brd')}</button><span class="d">${glyph('dn')}</span><i class="sep"></i><button aria-label="列表">${glyph('lst')}</button><span class="d">${glyph('dn')}</span>
        </div></tool-group></div></div>
      <main class="main">
        <div class="left">
          <dock-panel heading="花纹图例" .rows=${left1} .active=${2} .tabs=${[{ i: 't1', t: '点图例' }, { i: 't2', t: '线型图例' }, { i: 't4', t: '花纹图例' }]}></dock-panel>
          <dock-panel heading="颜色图例" .rows=${left2} .active=${2} .tabs=${[{ i: 't1', t: '标注样式' }, { i: 't2', t: '字体图例' }, { i: 't3', t: '颜色图例' }]}></dock-panel></div>
        <div class="center"><map-view class="view"></map-view>
          <div class="docs"><span class="doc">${glyph('jet')}YTLWorld起始页<button aria-label="关闭">${glyph('xb')}</button></span>
            <span class="doc">${glyph('geo')}空间图形编辑<button aria-label="关闭">${glyph('xb')}</button></span>
            <span class="doc on">${glyph('loy')}柱状图形编辑<button aria-label="关闭">${glyph('xb')}</button></span><span class="grow"></span>
            ${['nf', 'np', 'nn', 'nl'].map(n => html`<button class="nav" aria-label=${n}>${glyph(n)}</button>`)}</div></div>
        <div class="right">
          <dock-panel heading="空间图形" .rows=${right1} .tabs=${[{ i: 'geo', t: '空间图形' }, { i: 't6', t: '布局' }]}></dock-panel>
          <dock-panel heading="柱状图" .rows=${right2} .tabs=${[{ i: 't4', t: '柱状图' }, { i: 't5', t: '剖面图' }]}></dock-panel>
          <dock-panel heading="属性" scroll .rows=${right3} .tabs=${[{ i: 't6', t: '属性表' }, { i: 't7', t: '查询表' }, { i: 't8', t: '报告' }]}></dock-panel></div>
      </main>
      <section class="strip params"><b>编辑属性模板图元生成参数：</b><span>当前属性&gt;&gt;</span><a href="#">土层特征</a><i class="rule"></i><span>鼠标操作&gt;&gt; 选择模板图元</span>
        <label><input type="radio" name="mode" checked>增加选择</label><label><input type="radio" name="mode">剔除选择</label><i class="rule"></i>
        <span>图形窗口中心(m)&gt;&gt;</span><label>水平<input type="text" value="0.110"></label><label>垂直<input type="text" value="-2.497"></label><i class="rule"></i>
        <label>显示比例尺<input class="sc" type="text" value="0.456"></label></section>
      <section class="strip hint"><b>操作提示：</b><span>选择图形中的当前属性表模板图元，右击图形将以当前图元(红色标记)为例编辑选定的模板图元的参数表达式</span><i class="rule"></i>${BALL}<span>当前模板图元(红色标记)参数表达式正确!</span></section>
      <footer class="status"><span class="s1">编辑模板图元</span><span class="s2">坐标: X=1.080 , Y=0.000</span><span class="s3">比例尺: 0.456</span><span class="s4">坐标系统: 笛卡尔数学坐标系</span><span class="s5">地图投影：数学平面;无投影</span></footer>
      <param-dialog class="dialog"></param-dialog>
      <p class="banner">模板图元技术：图形和数据库之间的桥梁，填表式对其进行快速高效的编程</p>`;
  }
}
